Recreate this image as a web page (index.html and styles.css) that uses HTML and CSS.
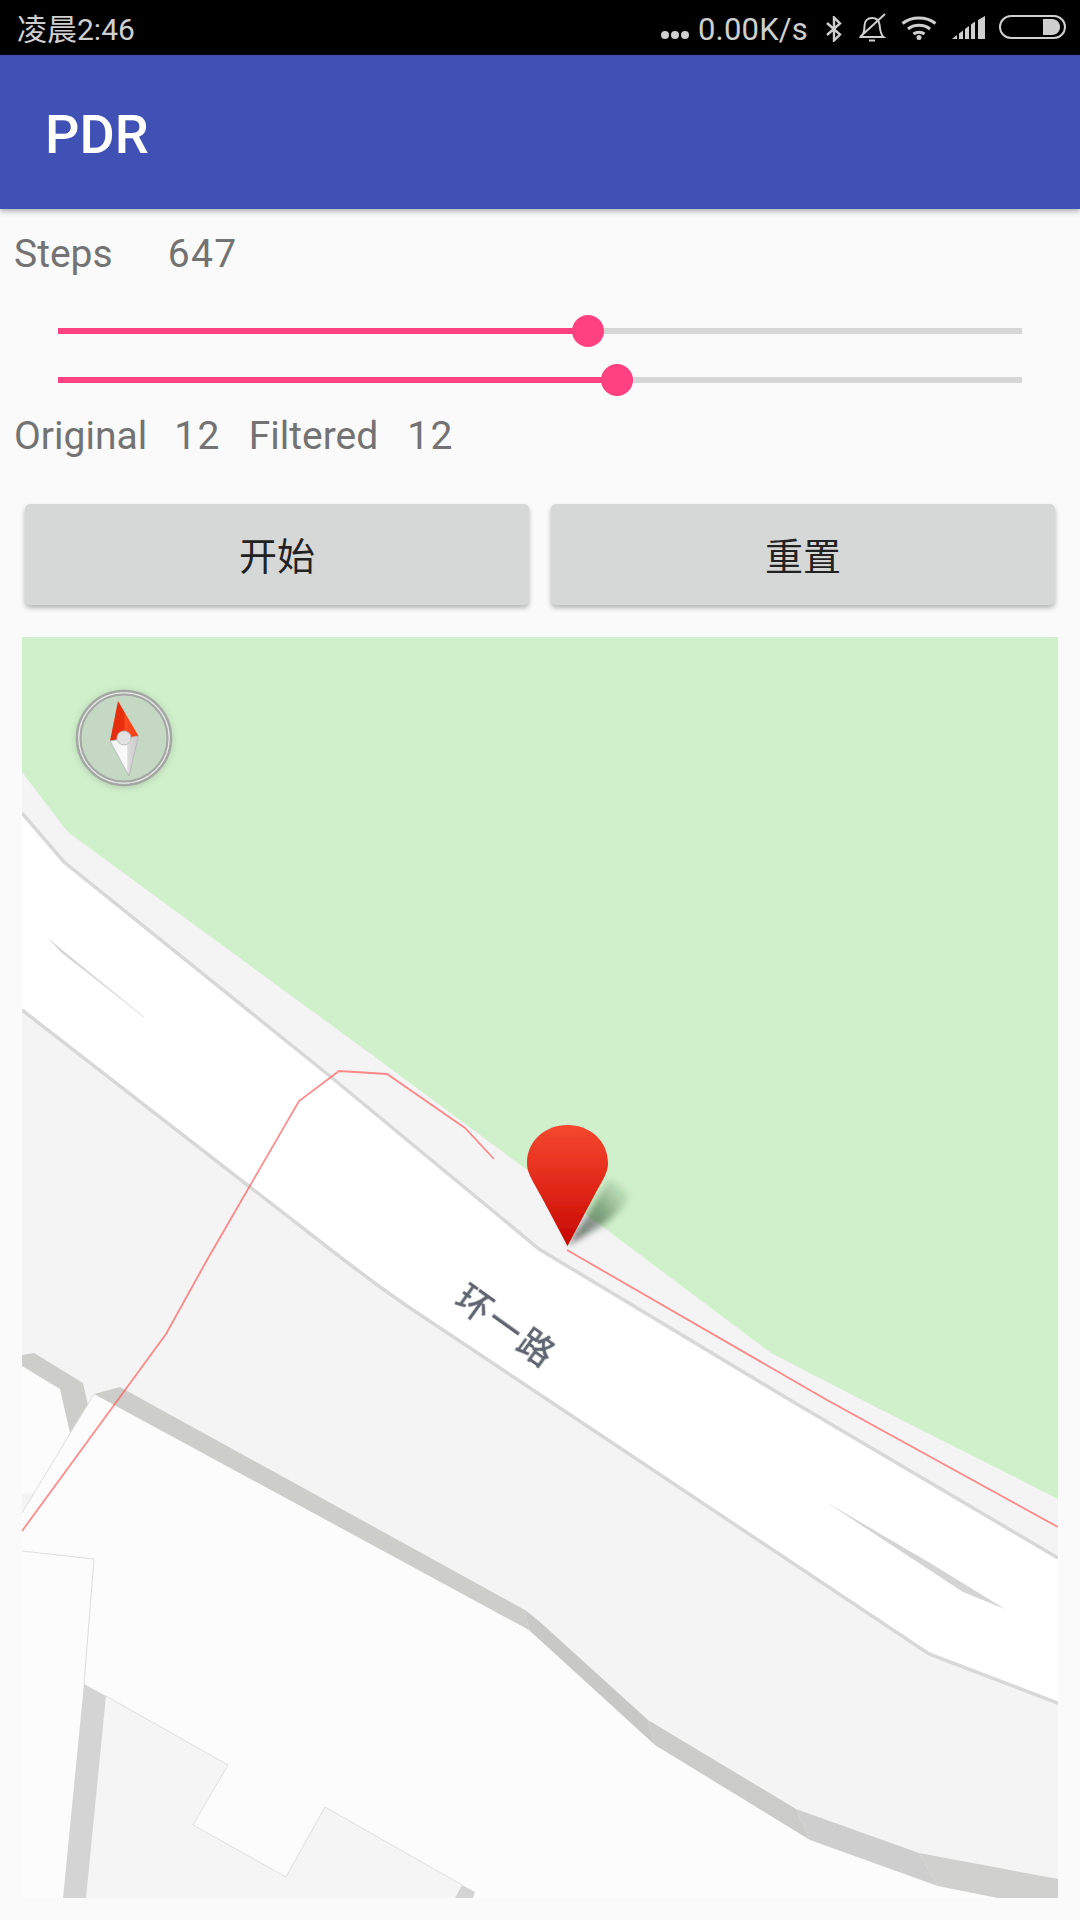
FILE: index.html
```html
<!DOCTYPE html>
<html lang="zh">
<head>
<meta charset="utf-8">
<title>PDR</title>
<link rel="stylesheet" href="styles.css">
</head>
<body>
<div class="screen">
  <header class="statusbar">
    <span class="clock">凌晨2:46</span>
    <div class="status-right">
      <svg class="dots" width="30" height="10" viewBox="0 0 30 10"><circle cx="5" cy="5" r="4"/><circle cx="15" cy="5" r="4"/><circle cx="25" cy="5" r="4"/></svg>
      <span class="speed">0.00K/s</span>
      <svg class="ico-bt" width="18" height="26" viewBox="0 0 18 26"><path d="M2 7 L15 18.5 L9 24.5 V1.5 L15 7.5 L2 19" fill="none" stroke-width="2.4"/></svg>
      <svg class="ico-bell" width="28" height="30" viewBox="0 0 28 30"><path d="M3 24 C6 21 6.5 18 6.500 13 C6.500 8 9.500 5 14 5 C18 5 21 7.500 21.500 11.500 C22 17 22.500 21.500 25.500 24 Z M11 27.500 H17 M2 24 L27 1" fill="none" stroke-width="2"/></svg>
      <svg class="ico-wifi" width="36" height="24" viewBox="0 0 36 24"><g fill="none" stroke-width="3"><path d="M1.500 7.500 C10.500 0 25.500 0 34.500 7.500"/><path d="M7 13 C13 8 23 8 29 13"/><path d="M12.500 18 C15.500 15.500 20.500 15.500 23.500 18"/></g><circle class="solid" cx="18" cy="21.500" r="2.500"/></svg>
      <svg class="ico-signal" width="34" height="24" viewBox="0 0 34 24"><path class="solid" d="M0 23 L5 19 V23 Z M7 17.500 L11 14.500 V23 H7 Z M13 13 L17 10 V23 H13 Z M19 8.500 L23 5.500 V23 H19 Z M26 4 L33 0 V23 H26 Z"/></svg>
      <svg class="ico-battery" width="67" height="25" viewBox="0 0 67 25"><rect x="1" y="1" width="65" height="22" rx="11" fill="none" stroke-width="2"/><path class="solid" d="M44 4 H53 C58 4 61 8 61 12 C61 16 58 20 53 20 H44 Z"/></svg>
    </div>
  </header>

  <div class="appbar"><h1 class="title">PDR</h1></div>

  <main class="content">
    <div class="row row-steps">
      <span class="label">Steps</span><span class="val val-steps">647</span>
    </div>

    <div class="sliders">
      <div class="track"><div class="fill" style="width:55%"><span class="thumb"></span></div></div>
      <div class="track"><div class="fill" style="width:58%"><span class="thumb"></span></div></div>
    </div>

    <div class="row row-counts">
      <span class="label">Original</span><span class="val val-orig">12</span>
      <span class="label label-filtered">Filtered</span><span class="val val-filt">12</span>
    </div>

    <div class="buttons">
      <button class="btn" type="button">开始</button>
      <button class="btn" type="button">重置</button>
    </div>

    <svg class="map" width="1036" height="1261" viewBox="22 637 1036 1261">
      <defs>
        <linearGradient id="pinGrad" x1="0" y1="0" x2="0" y2="1">
          <stop offset="0" stop-color="#f5482f"/>
          <stop offset="0.55" stop-color="#df2517"/>
          <stop offset="1" stop-color="#c40800"/>
        </linearGradient>
        <linearGradient id="shadowGrad" gradientUnits="userSpaceOnUse" x1="575" y1="1240" x2="632" y2="1190">
          <stop offset="0" stop-color="#000" stop-opacity="0.55"/>
          <stop offset="0.5" stop-color="#1c4a20" stop-opacity="0.45"/>
          <stop offset="1" stop-color="#1c4a20" stop-opacity="0"/>
        </linearGradient>
        <linearGradient id="redTop" x1="0" y1="0" x2="1" y2="0">
          <stop offset="0" stop-color="#e22c0c"/>
          <stop offset="0.5" stop-color="#e8300f"/>
          <stop offset="0.52" stop-color="#fb4a1e"/>
          <stop offset="1" stop-color="#f83c14"/>
        </linearGradient>
        <linearGradient id="whiteNeedle" x1="0" y1="0" x2="1" y2="0">
          <stop offset="0" stop-color="#f0f0f0"/>
          <stop offset="0.6" stop-color="#fbfbfb"/>
          <stop offset="0.62" stop-color="#dcdcdc"/>
          <stop offset="1" stop-color="#c8c8c8"/>
        </linearGradient>
        <filter id="soft" x="-30%" y="-30%" width="160%" height="160%"><feGaussianBlur stdDeviation="3"/></filter>
        <filter id="softer" x="-10%" y="-10%" width="120%" height="120%"><feGaussianBlur stdDeviation="0.6"/></filter>
        <filter id="labelSoft" x="-10%" y="-30%" width="120%" height="160%"><feGaussianBlur stdDeviation="0.35"/></filter>
      </defs>

      <rect class="m-base" x="22" y="637" width="1036" height="1261"/>
      <polygon class="m-green" points="22,637 1058,637 1058,1499 862,1400 771,1353 527,1170 379,1060 69,833 63,826 22,772"/>

      <polygon class="m-road" points="22,813 64,862 331,1077 539,1249 790,1400 1058,1558 1058,1703 929,1654 560,1408 410,1308 380,1287 344,1260 22,1010"/>
      <polyline class="m-edge" points="22,813 64,862 331,1077 539,1249 790,1400 1058,1558"/>
      <polyline class="m-edge" points="22,1010 344,1260 380,1287 410,1308 560,1408 929,1654 1058,1703"/>
      <polygon class="m-sliver m-sliver-thin" points="50,940 62,950 144,1017 61,952"/>
      <polygon class="m-sliver" points="826,1502 963,1592 1005,1609 930,1563"/>

      <polygon class="m-ground" points="94,1394 529,1630 655,1745 810,1840 938,1886 998,1898 22,1898 22,1513"/>
      <polygon class="m-ground" points="22,1366 60,1389 70,1432 35,1493 22,1494"/>
      <polygon class="m-wall" points="22,1355 34,1353 83,1383 88,1405 70,1433 60,1389 22,1366"/>
      <polygon class="m-wall" points="94,1394 120,1387 525,1610 529,1630"/>
      <polygon class="m-wall-b" points="525,1610 540,1622 648,1720 655,1745 529,1630"/>
      <polygon class="m-wall-c" points="648,1720 796,1809 810,1840 655,1745"/>
      <polygon class="m-wall-d" points="796,1809 919,1853 938,1886 810,1840"/>
      <polygon class="m-wall-e" points="919,1853 1058,1879 1058,1898 998,1898 938,1886"/>
      <polygon class="m-base" points="22,1494 35,1493 22,1513"/>
      <polyline class="m-thin" points="22,1513 94,1394"/>
      <polyline class="m-thin" points="22,1551 94,1559 84,1684"/>

      <polygon class="m-block" points="106,1696 228,1765 193,1825 286,1877 325,1807 462,1885 455,1898 86,1898"/>
      <polyline class="m-thin" points="106,1696 228,1765 193,1825 286,1877 325,1807 462,1885"/>
      <polygon class="m-sidewall" points="84,1684 106,1696 86,1898 63,1898"/>
      <polygon class="m-sidewall" points="462,1885 475,1892 473,1898 455,1898"/>

      <polyline class="m-route" points="22,1531 166,1334 207,1260 299,1101 339,1071 387,1074 465,1128 494,1159"/>
      <polyline class="m-route" points="567,1250 827,1400 1058,1527"/>

      <text class="m-label" transform="translate(506 1327) rotate(35.500)" text-anchor="middle" y="12" filter="url(#labelSoft)">环一路</text>

      <circle class="c-halo" cx="124" cy="739" r="49" filter="url(#soft)"/>
      <g class="compass" filter="url(#softer)">
        <circle class="c-disc" cx="124" cy="738" r="47"/>
        <circle class="c-ring-out" cx="124" cy="738" r="47"/>
        <circle class="c-ring-mid" cx="124" cy="738" r="45"/>
        <circle class="c-ring-in" cx="124" cy="738" r="43.500"/>
        <polygon points="118,701 138.500,736 110,741" fill="url(#redTop)"/>
        <polygon points="110,741 138.500,736 129,776" fill="url(#whiteNeedle)" stroke="#b5b5b5" stroke-width="0.8"/>
        <circle class="c-hub" cx="124" cy="738" r="7"/>
      </g>

      <path d="M567 1246 L585 1218 L608 1180 C618 1182 632 1190 628 1199 C622 1210 604 1226 590 1232 Z" fill="url(#shadowGrad)" filter="url(#soft)"/>
      <path d="M567.500 1246 L541 1196 C531 1178 527 1172 527 1163 C527 1141 545 1125 567.500 1125 C590 1125 608 1141 608 1163 C608 1172 604 1178 594 1196 Z" fill="url(#pinGrad)" filter="url(#softer)"/>
    </svg>
  </main>
</div>
</body>
</html>
```
FILE: styles.css
```css
* { box-sizing: border-box; }
html, body { margin: 0; padding: 0; }
body { background: #fafafa; font-family: Roboto, "Noto Sans CJK SC", sans-serif; }
.screen { width: 1080px; height: 1920px; overflow: hidden; display: flex; flex-direction: column; }

.statusbar { height: 55px; background: #000; color: #cfcfcf; display: flex; align-items: center; justify-content: space-between; padding: 0 14px 0 17px; font-size: 30px; flex: none; }
.clock { letter-spacing: 0; margin-top: -2px; }
.status-right { display: flex; align-items: center; }
.status-right svg { display: block; fill: #cfcfcf; stroke: #cfcfcf; flex: none; }
.status-right .solid { stroke: none; }
.dots { stroke: none !important; margin-top: 14px; }
.speed { margin: 3px 0 0 8px; font-size: 31px; letter-spacing: .2px; }
.ico-bt { margin-left: 17px; margin-top: 2px; }
.ico-bell { margin-left: 15px; }
.ico-wifi { margin-left: 15px; }
.ico-signal { margin-left: 15px; }
.ico-battery { margin-left: 13px; }

.appbar { height: 154px; background: #3f51b5; box-shadow: 0 2px 6px rgba(0,0,0,.35); display: flex; align-items: center; padding: 6px 0 0 45px; flex: none; position: relative; }
.title { margin: 0; color: #fff; font-size: 54px; font-weight: 500; line-height: 1; }

.content { display: flex; flex-direction: column; flex: 1; }
.row { display: flex; align-items: center; height: 46px; padding-left: 14px; color: #737373; font-size: 39px; }
.row-steps { margin-top: 22px; }
.val { letter-spacing: 1.400px; }
.val-steps { margin-left: 55px; }
.val-orig { margin-left: 27px; }
.label-filtered { margin-left: 28px; }
.val-filt { margin-left: 29px; }

.sliders { display: flex; flex-direction: column; gap: 43px; margin: 51px 58px 0; }
.track { height: 6px; background: #d6d6d6; }
.fill { height: 6px; background: #ff4081; position: relative; }
.thumb { position: absolute; right: -16px; top: -13px; width: 32px; height: 32px; border-radius: 50%; background: #ff4081; }
.row-counts { margin-top: 30px; }

.buttons { display: flex; gap: 22px; padding: 0 25px; margin-top: 45px; }
.btn { flex: 1; height: 101px; border: 0; border-radius: 5px; background: #d6d7d7; color: #222; font-family: "Noto Sans CJK SC", sans-serif; font-size: 38px; padding: 0 0 2px; box-shadow: 0 3px 5px rgba(0,0,0,.28); }

.map { display: block; margin: 32px 0 0 22px; flex: none; }
.m-base { fill: #f4f4f4; }
.m-green { fill: #d0efcb; }
.m-road { fill: #fff; }
.m-edge { fill: none; stroke: #d8d8d8; stroke-width: 3.500; }
.m-sliver { fill: #d4d4d4; }
.m-sliver-thin { stroke: #dcdcdc; stroke-width: .6; }
.m-ground { fill: #fcfcfc; }
.m-wall { fill: #cdcec9; }
.m-wall-b { fill: #c8c8c6; }
.m-wall-c { fill: #cbcbca; }
.m-wall-d { fill: #cecece; }
.m-wall-e { fill: #d0d0cf; }
.m-sidewall { fill: #d4d4d4; }
.m-block { fill: #f5f5f5; }
.m-thin { fill: none; stroke: #dedede; stroke-width: 1; }
.m-route { fill: none; stroke: #ff5050; stroke-width: 1.800; stroke-opacity: .65; }
.m-label { font-family: "Noto Sans CJK SC", sans-serif; font-size: 35px; font-weight: 500; letter-spacing: 3px; fill: #5f6570; }
.c-halo { fill: #000; fill-opacity: .12; }
.c-disc { fill: #c4d8c3; }
.c-ring-out { fill: none; stroke: #a3a6a3; stroke-width: 2.500; }
.c-ring-mid { fill: none; stroke: #e4e6e4; stroke-width: 1.500; }
.c-ring-in { fill: none; stroke: #a3a6a3; stroke-width: 2; }
.c-hub { fill: #e2e2e2; stroke: #bbb; stroke-width: 1; }
```
